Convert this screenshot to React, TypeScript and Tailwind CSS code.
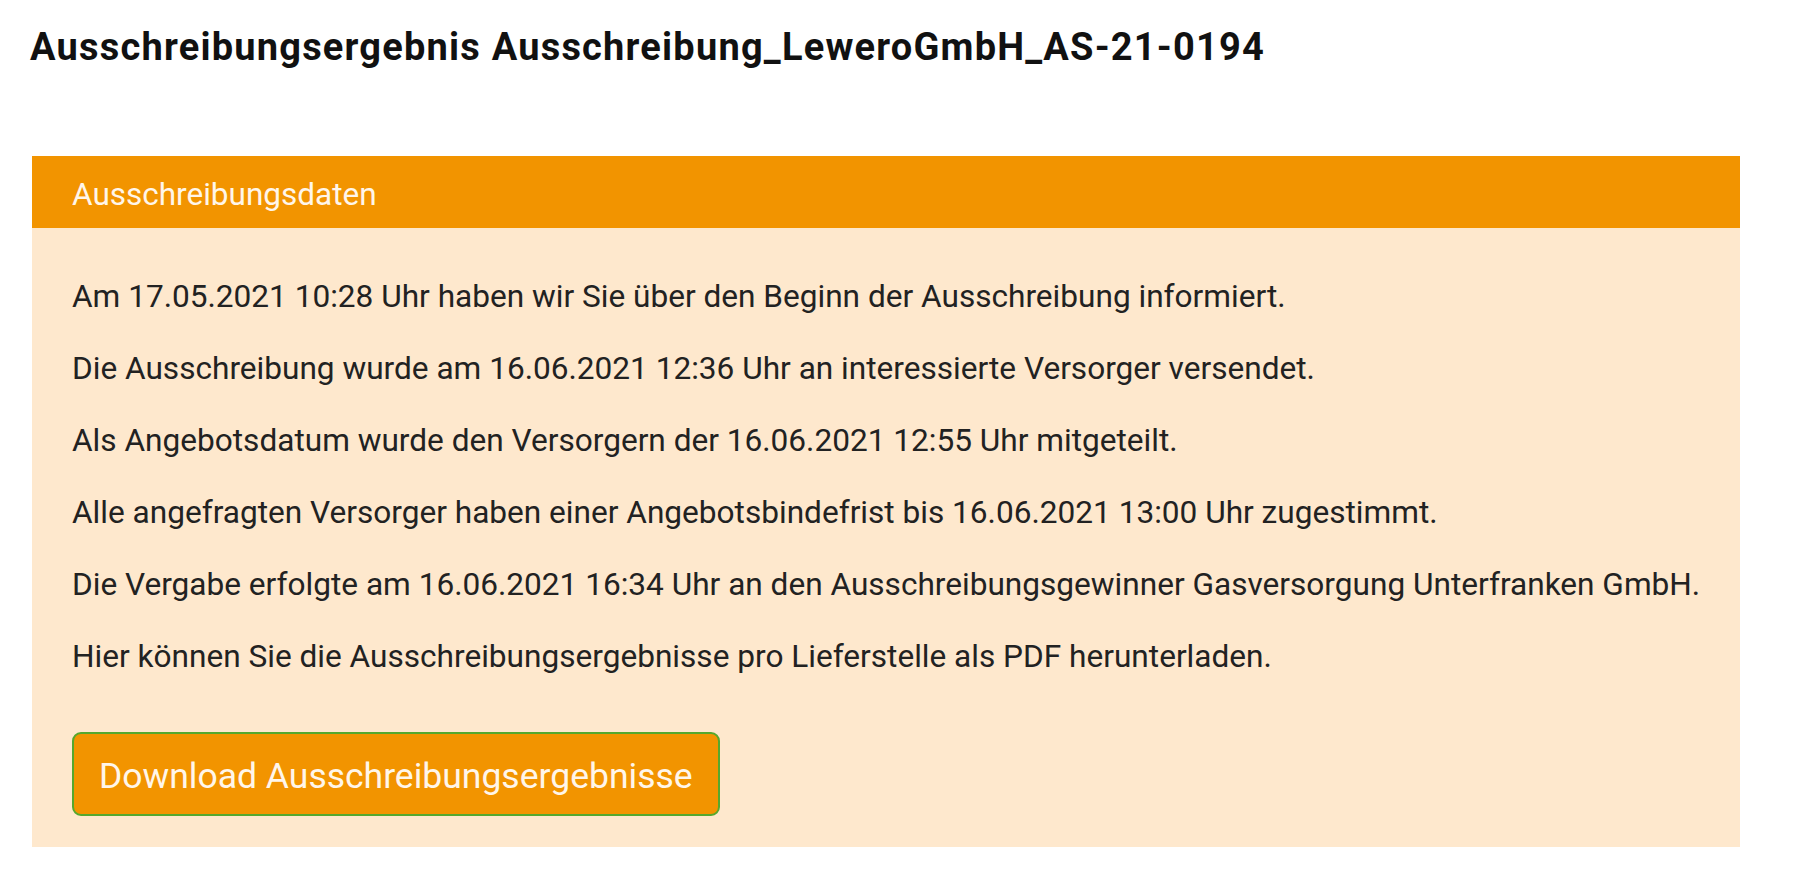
export default function App() {
  const lines = [
    "Am 17.05.2021 10:28 Uhr haben wir Sie über den Beginn der Ausschreibung informiert.",
    "Die Ausschreibung wurde am 16.06.2021 12:36 Uhr an interessierte Versorger versendet.",
    "Als Angebotsdatum wurde den Versorgern der 16.06.2021 12:55 Uhr mitgeteilt.",
    "Alle angefragten Versorger haben einer Angebotsbindefrist bis 16.06.2021 13:00 Uhr zugestimmt.",
    "Die Vergabe erfolgte am 16.06.2021 16:34 Uhr an den Ausschreibungsgewinner Gasversorgung Unterfranken GmbH.",
    "Hier können Sie die Ausschreibungsergebnisse pro Lieferstelle als PDF herunterladen.",
  ];
  return (
    <div className="min-h-[889px] bg-white font-['Roboto',sans-serif] pl-[32px] pr-[60px]">
      <h1 className="ml-[-2px] pt-[25px] text-[38px] leading-[44px] font-bold text-[#111] tracking-[1.2px]">
        Ausschreibungsergebnis Ausschreibung_LeweroGmbH_AS-21-0194
      </h1>
      <div className="mt-[87px] w-[1708px] bg-[#fee8cd]">
        <div className="h-[72px] bg-[#f29400] flex items-center pt-[6px] pl-[40px] text-[31.5px] text-[#fff6ea]">
          Ausschreibungsdaten
        </div>
        <div className="pl-[40px] pt-[33px] pb-[31px]">
          {lines.map((l) => (
            <p key={l} className="text-[31.6px] leading-[72px] whitespace-nowrap text-[#222]">
              {l}
            </p>
          ))}
          <button className="mt-[39px] h-[84px] pt-[5px] px-[25px] rounded-[9px] border-2 border-[#55a82e] bg-[#f29400] text-[35.5px] text-[#fff6ea]">
            Download Ausschreibungsergebnisse
          </button>
        </div>
      </div>
    </div>
  );
}
